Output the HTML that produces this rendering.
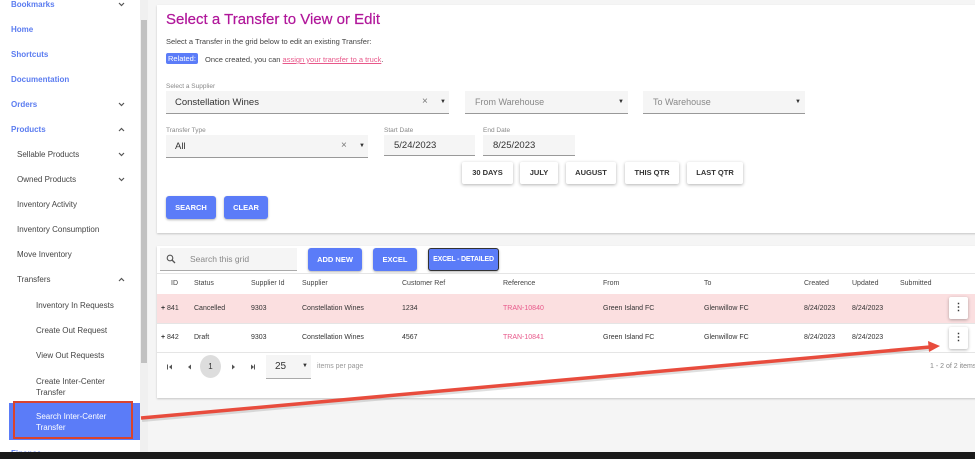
<!DOCTYPE html>
<html><head><meta charset="utf-8"><style>
*{margin:0;padding:0;box-sizing:border-box}
body{width:975px;height:459px;overflow:hidden;background:#f5f5f5;font-family:"Liberation Sans",Arial,sans-serif;position:relative;color:#333}
.a{position:absolute;white-space:nowrap}
.sb{position:absolute;left:0;top:0;width:140px;height:459px;background:#fff}
.nav{position:absolute;font-size:8px;font-weight:bold;color:#5b7cf0}
.sub{position:absolute;font-size:8px;color:#444}
.chev{position:absolute;left:118px;width:7px;height:5px}
.card{position:absolute;background:#fff;box-shadow:0 1px 2px rgba(0,0,0,.2)}
.fld{position:absolute;background:#f5f5f5;border-bottom:1px solid #999}
.lbl{position:absolute;font-size:6.5px;color:#888}
.btn{position:absolute;background:#fff;box-shadow:0 1px 3px rgba(0,0,0,.3);border-radius:2px;font-size:7.5px;font-weight:bold;text-align:center;color:#333}
.bb{position:absolute;background:#5b7cf8;color:#fff;border-radius:3px;font-size:7.5px;font-weight:bold;text-align:center;box-shadow:0 1px 2px rgba(0,0,0,.3)}
.th{position:absolute;font-size:7px;color:#444;top:280px}
.td{position:absolute;font-size:7px;color:#333}
</style></head><body>
<svg width="0" height="0" style="position:absolute"><defs>
<symbol id="dn" viewBox="0 0 7 5"><path d="M1 1 L3.5 3.5 L6 1" fill="none" stroke="#555" stroke-width="1.2"/></symbol>
<symbol id="up" viewBox="0 0 7 5"><path d="M1 4 L3.5 1.5 L6 4" fill="none" stroke="#555" stroke-width="1.2"/></symbol>
</defs></svg>
<div class="sb">
<div class="nav" style="left:11px;top:0">Bookmarks</div><svg class="chev" style="top:2px"><use href="#dn"/></svg>
<div class="nav" style="left:11px;top:25px">Home</div>
<div class="nav" style="left:11px;top:50px">Shortcuts</div>
<div class="nav" style="left:11px;top:75px">Documentation</div>
<div class="nav" style="left:11px;top:100px">Orders</div><svg class="chev" style="top:102px"><use href="#dn"/></svg>
<div class="nav" style="left:11px;top:125px">Products</div><svg class="chev" style="top:127px"><use href="#up"/></svg>
<div class="sub" style="left:17px;top:150px">Sellable Products</div><svg class="chev" style="top:152px"><use href="#dn"/></svg>
<div class="sub" style="left:17px;top:175px">Owned Products</div><svg class="chev" style="top:177px"><use href="#dn"/></svg>
<div class="sub" style="left:17px;top:200px">Inventory Activity</div>
<div class="sub" style="left:17px;top:225px">Inventory Consumption</div>
<div class="sub" style="left:17px;top:250px">Move Inventory</div>
<div class="sub" style="left:17px;top:275px">Transfers</div><svg class="chev" style="top:277px"><use href="#up"/></svg>
<div class="sub" style="left:36px;top:301px">Inventory In Requests</div>
<div class="sub" style="left:36px;top:326px">Create Out Request</div>
<div class="sub" style="left:36px;top:351px">View Out Requests</div>
<div class="sub" style="left:36px;top:376px;line-height:11px">Create Inter-Center<br>Transfer</div>
<div class="a" style="left:9px;top:403px;width:131px;height:37px;background:#5b7cf8"></div>
<div class="a" style="left:13px;top:401px;width:120px;height:38px;border:2px solid #d9432f"></div>
<div class="a" style="left:36px;top:411px;font-size:8px;color:#fff;line-height:11px">Search Inter-Center<br>Transfer</div>
<div class="nav" style="left:11px;top:449px">Finance</div>
</div>
<div class="a" style="left:140px;top:0;width:8px;height:459px;background:#f0f0f0"></div>
<div class="a" style="left:141px;top:20px;width:6px;height:343px;background:#c1c1c1"></div>

<div class="card" style="left:157px;top:5px;width:830px;height:228px"></div>
<div class="a" style="left:166px;top:11px;font-size:15px;color:#b0169a;-webkit-text-stroke:0.2px #b0169a">Select a Transfer to View or Edit</div>
<div class="a" style="left:166px;top:37px;font-size:7.5px;color:#444">Select a Transfer in the grid below to edit an existing Transfer:</div>
<div class="a" style="left:166px;top:53px;font-size:7.5px;background:#5b7cf8;color:#fff;padding:1px 2px;border-radius:2px">Related:</div>
<div class="a" style="left:205px;top:55px;font-size:7.5px;color:#444">Once created, you can <span style="color:#e8588a;text-decoration:underline">assign your transfer to a truck</span>.</div>

<div class="lbl" style="left:166px;top:83px">Select a Supplier</div>
<div class="fld" style="left:166px;top:91px;width:283px;height:23px"></div>
<div class="a" style="left:175px;top:97px;font-size:9.5px;color:#333">Constellation Wines</div>
<div class="a" style="left:422px;top:96px;font-size:10px;color:#777">×</div><div class="a" style="left:440px;top:99px;font-size:6px">▼</div>
<div class="fld" style="left:465px;top:91px;width:163px;height:23px"></div>
<div class="a" style="left:475px;top:97px;font-size:9px;color:#888">From Warehouse</div><div class="a" style="left:618px;top:99px;font-size:6px">▼</div>
<div class="fld" style="left:643px;top:91px;width:162px;height:23px"></div>
<div class="a" style="left:653px;top:97px;font-size:9px;color:#888">To Warehouse</div><div class="a" style="left:795px;top:99px;font-size:6px">▼</div>

<div class="lbl" style="left:166px;top:127px">Transfer Type</div>
<div class="fld" style="left:166px;top:135px;width:202px;height:23px"></div>
<div class="a" style="left:175px;top:141px;font-size:9.5px">All</div>
<div class="a" style="left:341px;top:140px;font-size:10px;color:#777">×</div><div class="a" style="left:359px;top:143px;font-size:6px">▼</div>
<div class="lbl" style="left:384px;top:127px">Start Date</div>
<div class="fld" style="left:384px;top:135px;width:91px;height:21px"></div>
<div class="a" style="left:394px;top:140px;font-size:9.5px">5/24/2023</div>
<div class="lbl" style="left:483px;top:127px">End Date</div>
<div class="fld" style="left:483px;top:135px;width:92px;height:21px"></div>
<div class="a" style="left:493px;top:140px;font-size:9.5px">8/25/2023</div>

<div class="btn" style="left:462px;top:162px;width:51px;height:22px;line-height:22px">30 DAYS</div>
<div class="btn" style="left:520px;top:162px;width:38px;height:22px;line-height:22px">JULY</div>
<div class="btn" style="left:566px;top:162px;width:50px;height:22px;line-height:22px">AUGUST</div>
<div class="btn" style="left:625px;top:162px;width:54px;height:22px;line-height:22px">THIS QTR</div>
<div class="btn" style="left:687px;top:162px;width:56px;height:22px;line-height:22px">LAST QTR</div>
<div class="bb" style="left:166px;top:196px;width:50px;height:23px;line-height:23px">SEARCH</div>
<div class="bb" style="left:224px;top:196px;width:44px;height:23px;line-height:23px">CLEAR</div>

<div class="card" style="left:157px;top:246px;width:830px;height:152px"></div>
<div class="a" style="left:160px;top:248px;width:137px;height:23px;background:#f5f5f5;border-bottom:1px solid #aaa"></div>
<svg class="a" style="left:166px;top:254px" width="10" height="10"><circle cx="4" cy="4" r="2.8" fill="none" stroke="#555" stroke-width="1.1"/><line x1="6" y1="6" x2="9" y2="9" stroke="#555" stroke-width="1.3"/></svg>
<div class="a" style="left:190px;top:254px;font-size:8.5px;color:#888">Search this grid</div>
<div class="bb" style="left:308px;top:248px;width:54px;height:23px;line-height:23px">ADD NEW</div>
<div class="bb" style="left:373px;top:248px;width:44px;height:23px;line-height:23px">EXCEL</div>
<div class="bb" style="left:428px;top:248px;width:71px;height:23px;line-height:21px;border:1px solid #333;font-size:7px;letter-spacing:-0.2px">EXCEL - DETAILED</div>
<div class="a" style="left:157px;top:273px;width:818px;height:1px;background:#e5e5e5"></div>
<div class="th" style="left:171px">ID</div><div class="th" style="left:194px">Status</div><div class="th" style="left:251px">Supplier Id</div><div class="th" style="left:302px">Supplier</div><div class="th" style="left:402px">Customer Ref</div><div class="th" style="left:503px">Reference</div><div class="th" style="left:603px">From</div><div class="th" style="left:704px">To</div><div class="th" style="left:804px">Created</div><div class="th" style="left:852px">Updated</div><div class="th" style="left:900px">Submitted</div>
<div class="a" style="left:157px;top:294px;width:818px;height:29px;background:#fbdfe0"></div>
<div class="a" style="left:157px;top:323px;width:818px;height:1px;background:#e5e5e5"></div>
<div class="a" style="left:157px;top:352px;width:818px;height:1px;background:#e5e5e5"></div>
<div class="td" style="left:161px;top:305px"><b>+</b> 841</div><div class="td" style="left:194px;top:305px">Cancelled</div><div class="td" style="left:251px;top:305px">9303</div><div class="td" style="left:302px;top:305px">Constellation Wines</div><div class="td" style="left:402px;top:305px">1234</div><div class="td" style="left:503px;top:305px;color:#e8588a">TRAN-10840</div><div class="td" style="left:603px;top:305px">Green Island FC</div><div class="td" style="left:704px;top:305px">Glenwillow FC</div><div class="td" style="left:804px;top:305px">8/24/2023</div><div class="td" style="left:852px;top:305px">8/24/2023</div>
<div class="td" style="left:161px;top:334px"><b>+</b> 842</div><div class="td" style="left:194px;top:334px">Draft</div><div class="td" style="left:251px;top:334px">9303</div><div class="td" style="left:302px;top:334px">Constellation Wines</div><div class="td" style="left:402px;top:334px">4567</div><div class="td" style="left:503px;top:334px;color:#e8588a">TRAN-10841</div><div class="td" style="left:603px;top:334px">Green Island FC</div><div class="td" style="left:704px;top:334px">Glenwillow FC</div><div class="td" style="left:804px;top:334px">8/24/2023</div><div class="td" style="left:852px;top:334px">8/24/2023</div>
<div class="btn" style="left:949px;top:297px;width:19px;height:22px;line-height:22px;font-size:10px">⋮</div>
<div class="btn" style="left:949px;top:327px;width:19px;height:22px;line-height:22px;font-size:10px">⋮</div>
<svg class="a" style="left:166px;top:363px" width="30" height="8">
<rect x="1" y="1.5" width="1" height="5" fill="#555"/><path d="M6 1.5 L3 4 L6 6.5Z" fill="#555"/>
<path d="M25 1.5 L22 4 L25 6.5Z" fill="#555"/>
</svg>
<svg class="a" style="left:230px;top:363px" width="30" height="8">
<path d="M2 1.5 L5 4 L2 6.5Z" fill="#555"/><path d="M21 1.5 L24 4 L21 6.5Z" fill="#555"/><rect x="24" y="1.5" width="1" height="5" fill="#555"/>
</svg>
<div class="a" style="left:200px;top:355px;width:21px;height:23px;border-radius:50%;background:#ddd;font-size:8px;text-align:center;line-height:23px">1</div>
<div class="a" style="left:266px;top:355px;width:45px;height:24px;background:#f5f5f5;border-bottom:1px solid #aaa"></div>
<div class="a" style="left:275px;top:361px;font-size:10px">25</div><div class="a" style="left:302px;top:363px;font-size:6px">▼</div>
<div class="a" style="left:317px;top:363px;font-size:7px;color:#999">items per page</div>
<div class="a" style="left:930px;top:363px;font-size:7px;color:#888">1 - 2 of 2 items</div>

<svg class="a" style="left:0;top:0" width="975" height="459"><line x1="142" y1="420" x2="930" y2="349" stroke="#333" stroke-width="4" opacity=".15"/><line x1="141" y1="418" x2="930" y2="347" stroke="#e84c3d" stroke-width="3.5"/><polygon points="940,346 928,341 929,352" fill="#e84c3d"/></svg>
<div class="a" style="left:0;top:452px;width:975px;height:7px;background:#1a1a1a"></div>
</body></html>
